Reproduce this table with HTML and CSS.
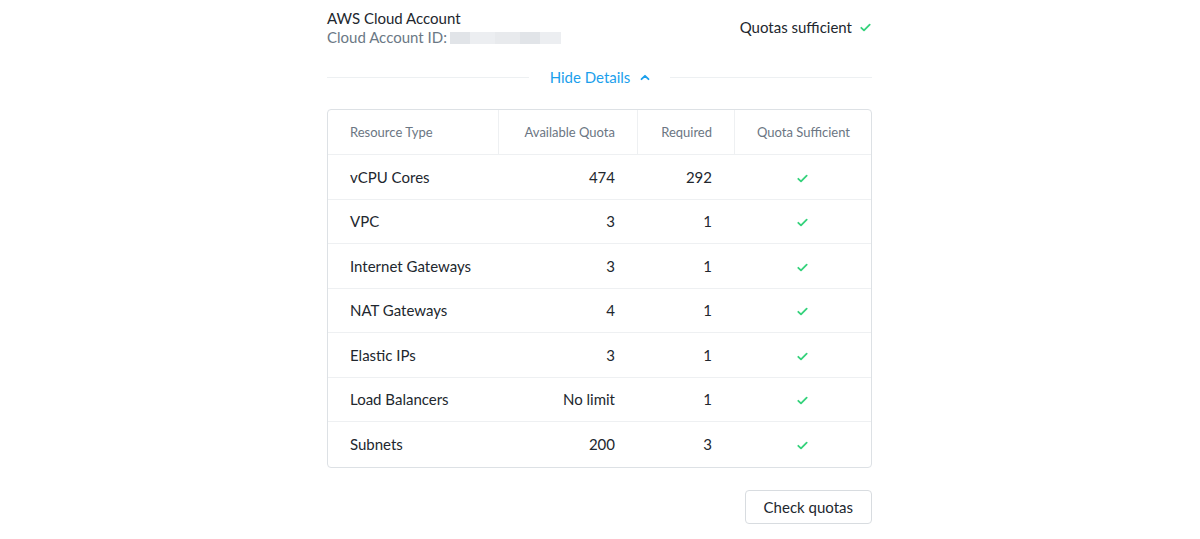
FILE: index.html
```html
<!DOCTYPE html>
<html>
<head>
<meta charset="utf-8">
<link rel="stylesheet" href="styles.css">
</head>
<body>
<div class="wrap">
  <div class="top">
    <div class="account">
      <div class="acc-name">AWS Cloud Account</div>
      <div class="acc-id">Cloud Account ID:<span class="redacted"></span></div>
    </div>
    <div class="status">Quotas sufficient
      <svg class="check" width="11" height="9" viewBox="0 0 11 9"><path d="M1.3 4.8 L4 7.3 L9.7 1.6" fill="none" stroke="#34d27b" stroke-width="1.8" stroke-linecap="round" stroke-linejoin="round"/></svg>
    </div>
  </div>
  <div class="divider">
    <span class="line"></span>
    <span class="toggle">Hide Details
      <svg width="10" height="7" viewBox="0 0 10 7"><path d="M1.5 5.2 L5 1.8 L8.5 5.2" fill="none" stroke="#1b9fec" stroke-width="1.8" stroke-linecap="round" stroke-linejoin="round"/></svg>
    </span>
    <span class="line"></span>
  </div>
  <div class="table">
    <div class="row head">
      <div class="c c1">Resource Type</div>
      <div class="c c2">Available Quota</div>
      <div class="c c3">Required</div>
      <div class="c c4">Quota Sufficient</div>
    </div>
    <div class="row"><div class="c c1">vCPU Cores</div><div class="c c2">474</div><div class="c c3">292</div><div class="c c4"><svg class="check" width="11" height="9" viewBox="0 0 11 9"><path d="M1.3 4.8 L4 7.3 L9.7 1.6" fill="none" stroke="#34d27b" stroke-width="1.8" stroke-linecap="round" stroke-linejoin="round"/></svg></div></div>
    <div class="row"><div class="c c1">VPC</div><div class="c c2">3</div><div class="c c3">1</div><div class="c c4"><svg class="check" width="11" height="9" viewBox="0 0 11 9"><path d="M1.3 4.8 L4 7.3 L9.7 1.6" fill="none" stroke="#34d27b" stroke-width="1.8" stroke-linecap="round" stroke-linejoin="round"/></svg></div></div>
    <div class="row"><div class="c c1">Internet Gateways</div><div class="c c2">3</div><div class="c c3">1</div><div class="c c4"><svg class="check" width="11" height="9" viewBox="0 0 11 9"><path d="M1.3 4.8 L4 7.3 L9.7 1.6" fill="none" stroke="#34d27b" stroke-width="1.8" stroke-linecap="round" stroke-linejoin="round"/></svg></div></div>
    <div class="row"><div class="c c1">NAT Gateways</div><div class="c c2">4</div><div class="c c3">1</div><div class="c c4"><svg class="check" width="11" height="9" viewBox="0 0 11 9"><path d="M1.3 4.8 L4 7.3 L9.7 1.6" fill="none" stroke="#34d27b" stroke-width="1.8" stroke-linecap="round" stroke-linejoin="round"/></svg></div></div>
    <div class="row"><div class="c c1">Elastic IPs</div><div class="c c2">3</div><div class="c c3">1</div><div class="c c4"><svg class="check" width="11" height="9" viewBox="0 0 11 9"><path d="M1.3 4.8 L4 7.3 L9.7 1.6" fill="none" stroke="#34d27b" stroke-width="1.8" stroke-linecap="round" stroke-linejoin="round"/></svg></div></div>
    <div class="row"><div class="c c1">Load Balancers</div><div class="c c2">No limit</div><div class="c c3">1</div><div class="c c4"><svg class="check" width="11" height="9" viewBox="0 0 11 9"><path d="M1.3 4.8 L4 7.3 L9.7 1.6" fill="none" stroke="#34d27b" stroke-width="1.8" stroke-linecap="round" stroke-linejoin="round"/></svg></div></div>
    <div class="row last"><div class="c c1">Subnets</div><div class="c c2">200</div><div class="c c3">3</div><div class="c c4"><svg class="check" width="11" height="9" viewBox="0 0 11 9"><path d="M1.3 4.8 L4 7.3 L9.7 1.6" fill="none" stroke="#34d27b" stroke-width="1.8" stroke-linecap="round" stroke-linejoin="round"/></svg></div></div>
  </div>
  <div class="actions">
    <button class="btn">Check quotas</button>
  </div>
</div>
</body>
</html>
```
FILE: styles.css
```css
html, body { margin: 0; padding: 0; background: #fff; }
body { font-family: Lato, "Noto Sans", sans-serif; color: #22272e; }
.wrap { width: 545px; margin-left: 327px; padding-top: 9px; }
.top { display: flex; justify-content: space-between; align-items: flex-start; }
.acc-name { font-size: 15px; line-height: 19px; color: #22272e; }
.acc-id { font-size: 15px; line-height: 19px; color: #6b7885; display: flex; align-items: center; }
.redacted { display: inline-block; width: 111px; height: 12px; margin-left: 3px;
  background: linear-gradient(90deg, #e1e4e8 0 20px, #eceef1 20px 45px, #e8eaed 45px 70px, #e1e4e8 70px 90px, #eceef1 90px); }
.status { font-size: 15px; margin-top: 9px; margin-right: 1px; display: flex; align-items: center; gap: 8px; color: #22272e; white-space: nowrap; }
.divider { display: flex; align-items: center; margin-top: 20px; height: 20px; }
.line { flex: 1; height: 1px; background: #edf0f2; }
.toggle { color: #1b9fec; font-size: 15px; padding: 0 20px 0 21px; display: flex; align-items: center; gap: 10px; }
.table { margin-top: 22px; border: 1px solid #dde1e5; border-radius: 4px; }
.row { display: grid; grid-template-columns: 170px 139px 97px 1fr; height: 44.5px; border-bottom: 1px solid #eef0f2; box-sizing: border-box; }
.row.last { border-bottom: none; }
.c { display: flex; align-items: center; font-size: 15px; padding: 0 22px; white-space: nowrap; }
.c1 { justify-content: flex-start; }
.c2, .c3 { justify-content: flex-end; }
.c4 { justify-content: center; }
.c4 .check { margin-top: 3px; }
.head { height: 45px; }
.head .c { font-size: 13px; color: #6b7683; }
.head .c + .c { border-left: 1px solid #eef0f2; }
.actions { display: flex; justify-content: flex-end; margin-top: 22px; }
.btn { font-family: inherit; font-size: 15px; color: #22272e; background: #fff; border: 1px solid #d8dce0; border-radius: 4px; height: 34px; padding: 0 18px; }
```
